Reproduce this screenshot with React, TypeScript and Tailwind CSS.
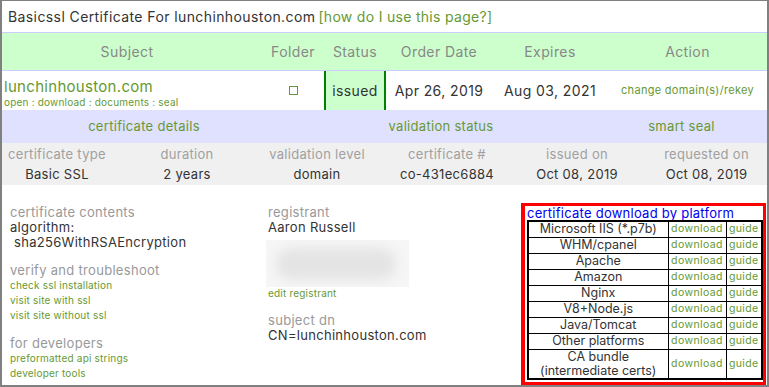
const FONT = { fontFamily: "Inter, 'Liberation Sans', sans-serif" };

const DETAILS = [
  { label: "certificate type", value: "Basic SSL" },
  { label: "duration", value: "2 years" },
  { label: "validation level", value: "domain" },
  { label: "certificate #", value: "co-431ec6884" },
  { label: "issued on", value: "Oct 08, 2019" },
  { label: "requested on", value: "Oct 08, 2019" },
];

const PLATFORMS = [
  "Microsoft IIS (*.p7b)",
  "WHM/cpanel",
  "Apache",
  "Amazon",
  "Nginx",
  "V8+Node.js",
  "Java/Tomcat",
  "Other platforms",
];

function Section({ label, children }: { label: string; children: React.ReactNode }) {
  return (
    <div className="flex flex-col">
      <div className="text-[13px] leading-[15px] text-[#999]">{label}</div>
      {children}
    </div>
  );
}

function SmallLink({ children }: { children: React.ReactNode }) {
  return <div className="text-[10px] leading-[15px] tracking-[0.2px] text-[#669933]">{children}</div>;
}

export default function App() {
  return (
    <div style={FONT} className="h-[387px] w-[769px] overflow-hidden bg-white tracking-[0.3px]">
      <div className="flex h-full flex-col border-t border-r-2 border-b-2 border-l-2 border-[#808080]">
        {/* title */}
        <div className="flex h-[31px] shrink-0 items-center gap-[3px] pl-[6px] text-[14px] tracking-[0.4px] text-[#333]">
          <span>Basicssl Certificate For lunchinhouston.com</span>
          <span className="tracking-[0.3px] text-[#669933]">[how do I use this page?]</span>
        </div>

        {/* header row */}
        <div className="grid h-[39px] shrink-0 grid-cols-[260px_62px_62px_106px_116px_1fr] items-center border-y border-[#ccccff] bg-[#ccffcc] text-[14px] tracking-[0.4px] text-[#888]">
          <div className="pr-[10px] text-center">Subject</div>
          <div className="text-center">Folder</div>
          <div className="text-center">Status</div>
          <div className="text-center">Order Date</div>
          <div className="text-center">Expires</div>
          <div className="text-center">Action</div>
        </div>

        {/* data row */}
        <div className="grid h-[39px] shrink-0 grid-cols-[260px_62px_62px_106px_116px_1fr] items-stretch text-[14px] tracking-[0.4px] text-[#333]">
          <div className="flex flex-col pt-[7px] pl-[2px]">
            <div className="text-[15px] leading-[18px] tracking-[0.3px] text-[#669933]">lunchinhouston.com</div>
            <div className="text-[10px] leading-[12px] tracking-[0.2px] text-[#669933]">open : download : documents : seal</div>
          </div>
          <div className="flex items-center justify-center">
            <span className="h-[9px] w-[9px] border-[1.5px] border-[#669933]" />
          </div>
          <div className="flex items-center justify-center border-x-2 border-[#008000] bg-[#ccffcc]">issued</div>
          <div className="flex items-center justify-center">Apr 26, 2019</div>
          <div className="flex items-center justify-center">Aug 03, 2021</div>
          <div className="flex items-center justify-center text-[11px] tracking-[0.3px] text-[#669933]">change domain(s)/rekey</div>
        </div>

        {/* purple row */}
        <div className="grid h-[33px] shrink-0 grid-cols-[284px_310px_1fr] items-center bg-[#e0e0ff] text-[13px] text-[#669933]">
          <div className="text-center">certificate details</div>
          <div className="text-center">validation status</div>
          <div className="text-center">smart seal</div>
        </div>

        {/* details */}
        <div className="grid h-[42px] shrink-0 grid-cols-[110px_150px_110px_150px_110px_1fr] content-center bg-[#f0f0f0] text-[13px] leading-[20px]">
          {DETAILS.map((d, i) => (
            <div key={d.label} className={i === 5 ? "pl-[14px] text-center" : "text-center"}>
              <div className="text-[#a0a0a0]">{d.label}</div>
              <div className="text-[#333]">{d.value}</div>
            </div>
          ))}
        </div>

        {/* body */}
        <div className="flex min-h-0 flex-1">
          <div className="flex w-[256px] flex-col gap-[13px] pt-[20px] pl-[8px]">
            <Section label="certificate contents">
              <div className="text-[13px] leading-[15px] text-[#333]">algorithm:</div>
              <div className="pl-[4px] text-[13px] leading-[15px] text-[#333]">sha256WithRSAEncryption</div>
            </Section>
            <Section label="verify and troubleshoot">
              <SmallLink>check ssl installation</SmallLink>
              <SmallLink>visit site with ssl</SmallLink>
              <SmallLink>visit site without ssl</SmallLink>
            </Section>
            <Section label="for developers">
              <SmallLink>preformatted api strings</SmallLink>
              <SmallLink>developer tools</SmallLink>
            </Section>
          </div>

          <div className="flex w-[250px] flex-col pt-[20px] pl-[10px]">
            <div className="text-[13px] leading-[15px] text-[#999]">registrant</div>
            <div className="text-[13px] leading-[15px] text-[#333]">Aaron Russell</div>
            <div className="mt-[5px] -ml-[2px] h-[47px] w-[143px] overflow-hidden bg-[#f6f6f6]">
              <div className="mt-[8px] ml-[10px] h-[32px] w-[120px] rounded-full bg-[#e4e4e4] blur-[6px]" />
            </div>
            <div className="text-[10px] leading-[12px] tracking-[0.2px] text-[#669933]">edit registrant</div>
            <div className="mt-[14px] text-[13px] leading-[15px] text-[#999]">subject dn</div>
            <div className="text-[13px] leading-[15px] text-[#333]">CN=lunchinhouston.com</div>
          </div>

          <div className="flex flex-1 justify-end pt-[18px] pr-[1px]">
            <div className="flex h-[182px] w-[245px] flex-col border-[3px] border-l-[4px] border-[#ff0000] pl-[2px]">
              <div className="text-[13px] leading-[14px] tracking-[0.25px] text-[#0000ee]">certificate download by platform</div>
              <table className="w-[236px] border-collapse border-2 border-black text-center tracking-normal">
                <colgroup>
                  <col className="w-[140px]" />
                  <col className="w-[58px]" />
                  <col />
                </colgroup>
                <tbody>
                  {PLATFORMS.map((p) => (
                    <tr key={p} className="h-[16px]">
                      <td className="border border-black p-0 text-[12.5px] leading-[14px] text-[#333]">{p}</td>
                      <td className="border border-black p-0 text-[10.5px] leading-[14px] tracking-[0.4px] text-[#669933]">download</td>
                      <td className="border border-black p-0 text-[10.5px] leading-[14px] tracking-[0.4px] text-[#669933]">guide</td>
                    </tr>
                  ))}
                  <tr className="h-[30px]">
                    <td className="border border-black p-0 text-[12.5px] leading-[14px] text-[#333]">
                      CA bundle
                      <br />
                      (intermediate certs)
                    </td>
                    <td className="border border-black p-0 text-[10.5px] tracking-[0.4px] text-[#669933]">download</td>
                    <td className="border border-black p-0 text-[10.5px] tracking-[0.4px] text-[#669933]">guide</td>
                  </tr>
                </tbody>
              </table>
            </div>
          </div>
        </div>
      </div>
    </div>
  );
}
